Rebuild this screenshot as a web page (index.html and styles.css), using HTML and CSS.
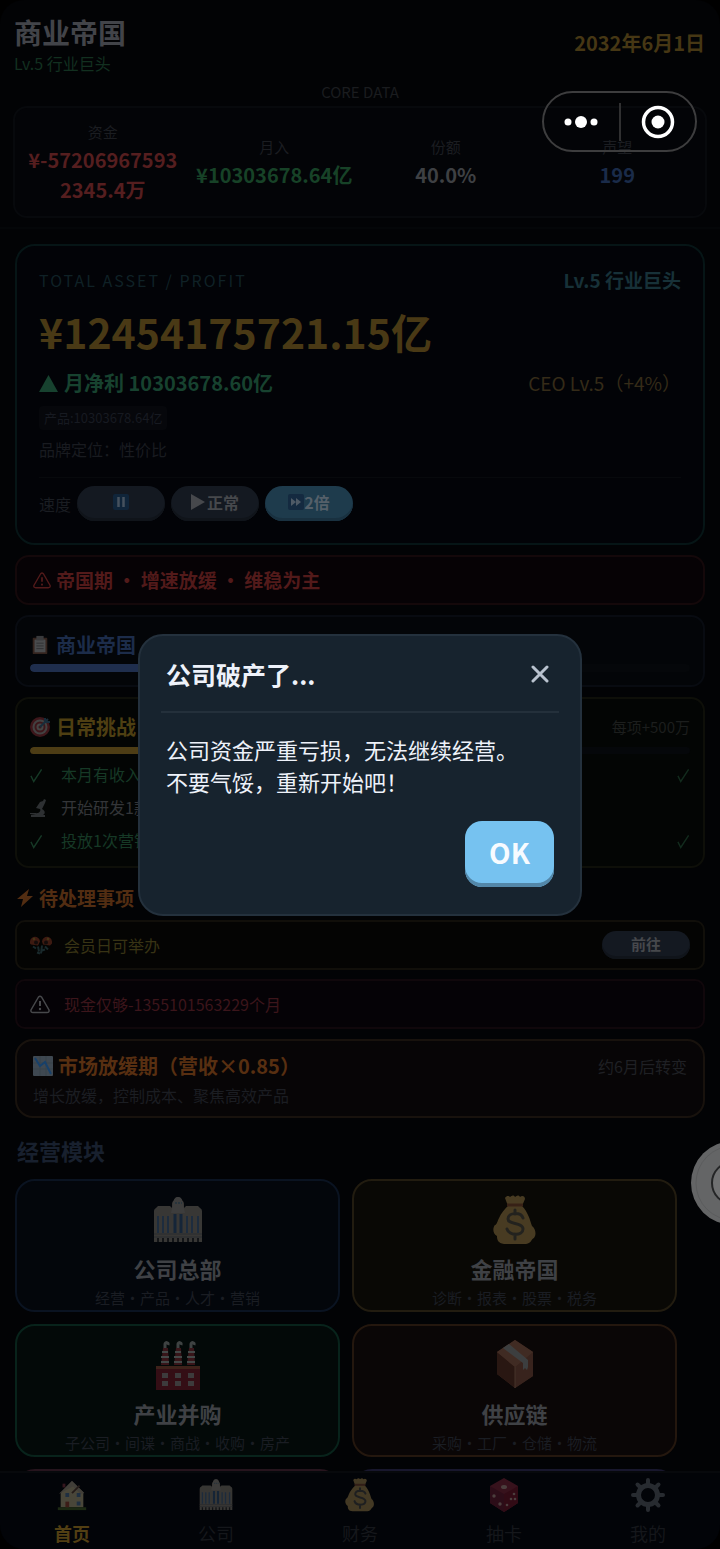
FILE: index.html
```html
<!DOCTYPE html>
<html lang="zh-CN">
<head>
<meta charset="utf-8">
<meta name="viewport" content="width=device-width, initial-scale=1">
<title>商业帝国</title>
<link rel="stylesheet" href="styles.css">
</head>
<body>
<svg class="defs" aria-hidden="true">
  <symbol id="i-tower" viewBox="0 0 50 46">
    <path d="M1 14q0-2 2-3l2-2h12l2 2V7q0-3 3-4 0-3 3-3t3 3q3 1 3 4v4l2-2h12l2 2q2 1 2 3v31H1z" fill="#a89f8f"/>
    <path d="M20 8q0-8 5-8t5 8l2 8H18z" fill="#b8b2a8"/>
    <path d="M22 6h7" stroke="#7b97a8" stroke-width="2" stroke-dasharray="2 1"/>
    <path d="M5 19v17M10 19v17M15 19v17M34 19v17M39 19v17M45 19v17" stroke="#557eaa" stroke-width="2"/>
    <path d="M22 17v19M28 17v19" stroke="#3d6797" stroke-width="3"/>
    <path d="M1 37h48M1 40h48" stroke="#777a7c" stroke-width="1"/>
    <path d="M5 41v4M10 41v4M15 41v4M20 41v4M25 41v4M30 41v4M35 41v4M40 41v4M45 41v4" stroke="#333" stroke-width="2"/>
  </symbol>
  <symbol id="i-bag" viewBox="0 0 44 50">
    <path d="M15 11L12 3c2-3 4-2 5-1 2-2 4-2 5 0 2-2 4-2 5 0 2-2 5-1 5 2l-3 7c6 6 8 14 10 20 3 2 5 8 2 12-3 1-2 5-8 6H11c-6-1-7-4-7-8-5-3-4-9-2-11 3 0 2-9 13-19z" fill="#cda85f"/>
    <path d="M14 10h16" stroke="#98583b" stroke-width="3"/>
    <path d="M30 23c-2-6-15-6-15 1 0 6 15 3 15 10 0 7-14 7-16 0M22 15v4M22 39v5" fill="none" stroke="#5b5a55" stroke-width="3" stroke-linecap="round"/>
  </symbol>
  <symbol id="i-factory" viewBox="0 0 46 50">
    <path d="M1 26h44v24H1z" fill="#9c1b31"/>
    <path d="M1 26h44v3H1z" fill="#ba5940"/>
    <path d="M8 8h5l1 17H6zM21 8h5l1 17h-8zM34 8h5l1 17h-8z" fill="#a9303e"/>
    <path d="M7 12h6M6 17h8M6 22h8M20 12h6M19 17h8M19 22h8M33 12h7M32 17h8M32 22h8" stroke="#ccc" stroke-width="2"/>
    <path d="M10 8V4c0-2 4-2 3 1M23 8V4c0-2 4-2 3 1M36 8V4c0-2 4-2 3 1" fill="none" stroke="#bbb" stroke-width="3"/>
    <path d="M7 33h6v5H7zm13 0h6v5h-6zm13 0h6v5h-6zM7 41h6v5H7zm13 0h6v5h-6zm13 0h6v5h-6z" fill="#b7a6ab"/>
  </symbol>
  <symbol id="i-box" viewBox="0 0 38 50">
    <path d="M19 0l18 12v24L19 48 1 34V12z" fill="#a7664d"/>
    <path d="M1 12l18 15v21L1 34z" fill="#6c3b2c"/>
    <path d="M19 27l18-15v24L19 48z" fill="#98624d"/>
    <path d="M19 0l18 12-18 15L1 12z" fill="#b37b62"/>
    <path d="M13 4L7 8l20 15v7l2-2 2 2 1-3v-7z" fill="#a7b5b8"/>
    <path d="M19 27v21" stroke="#c09075"/>
  </symbol>
  <symbol id="i-house" viewBox="-2 -2 34 36">
    <path d="M5 8V4h3v4" fill="#a23d4c"/>
    <path d="M3 14L15 2l12 11v16H3z" fill="#dfd0a2"/>
    <path d="M1 15L15 1l13 13-4 1-8-8z" fill="#c5b89e"/>
    <path d="M15 14l8-8" stroke="#6d4c3c" stroke-width="2"/>
    <path d="M8 14h4v4H8zm12 0h4v4h-4zm0 9h4v4h-4z" fill="#5c8bb8"/>
    <path d="M8 23h4v7H8z" fill="#b5523b"/><path d="M0 29h30v3H0z" fill="#55782d"/>
  </symbol>
  <symbol id="i-dice" viewBox="0 0 30 34">
    <path d="M15 0l14 8v17l-14 9L1 25V8z" fill="#a83048"/>
    <path d="M1 8l14 8v18L1 25z" fill="#85213a"/><path d="M15 16l14-8v17l-14 9z" fill="#941a33"/>
    <ellipse cx="15" cy="9" rx="3" ry="2" fill="#e6b8ae"/>
    <g fill="#e6b8ae"><circle cx="5" cy="18" r="1.700"/><circle cx="11" cy="26" r="1.700"/><circle cx="25" cy="16" r="1.300"/><circle cx="22" cy="21" r="1.300"/><circle cx="18" cy="27" r="1.300"/><circle cx="26" cy="21" r="1.300"/></g>
  </symbol>
  <symbol id="i-gear" viewBox="0 0 34 34">
    <circle cx="17" cy="17" r="9.500" fill="none" stroke="#777d84" stroke-width="5"/>
    <path d="M17 2v5M17 27v5M2 17h5M27 17h5M6.500 6.500l4 4M23.500 23.500l4 4M6.500 27.500l4-4M23.500 10.500l4-4" stroke="#777d84" stroke-width="4" stroke-linecap="round"/>
  </symbol>
  <symbol id="i-warn" viewBox="0 0 20 18">
    <path d="M8.500 1.500L1 14.500Q.5 17 3 17h14q2.500 0 2-2.500L11.500 1.500q-1.500-1.500-3 0z" fill="none" stroke="currentColor" stroke-width="1.500"/>
    <path d="M10 5.500v5" stroke="currentColor" stroke-width="2"/><circle cx="10" cy="13.500" r="1.200" fill="currentColor"/>
  </symbol>
  <symbol id="i-check" viewBox="0 0 14 16">
    <path d="M1 9l3 6L12.500 2" fill="none" stroke="currentColor" stroke-width="1.500"/>
  </symbol>
</svg>

<div class="app">
  <header class="top">
    <div class="brand-row">
      <div>
        <h1 class="brand">商业帝国</h1>
        <p class="rank">Lv.5 行业巨头</p>
      </div>
      <time class="date" datetime="2032-06-01">2032年6月1日</time>
    </div>
    <p class="core-title">CORE DATA</p>
    <dl class="stats">
      <div class="stat red"><dt>资金</dt><dd>¥-572069675932345.4万</dd></div>
      <div class="stat green"><dt>月入</dt><dd>¥10303678.64亿</dd></div>
      <div class="stat plain"><dt>份额</dt><dd>40.0%</dd></div>
      <div class="stat blue"><dt>声望</dt><dd>199</dd></div>
    </dl>
  </header>

  <main class="content">
    <section class="hero">
      <div class="split">
        <span class="hero-label">TOTAL ASSET / PROFIT</span>
        <strong class="hero-rank">Lv.5 行业巨头</strong>
      </div>
      <p class="asset">¥12454175721.15亿</p>
      <div class="split profit-row">
        <strong class="profit"><svg class="up" viewBox="0 0 19 17"><path d="M9.500 0L19 17H0z" fill="currentColor"/></svg>月净利 10303678.60亿</strong>
        <span class="ceo">CEO Lv.5（+4%）</span>
      </div>
      <span class="tag">产品:10303678.64亿</span>
      <p class="position">品牌定位：性价比</p>
      <div class="speed">
        <span class="speed-label">速度</span>
        <button class="pill" type="button" aria-label="暂停"><svg class="key" viewBox="0 0 16 16"><rect width="16" height="16" rx="2" fill="#10253a"/><path d="M5.500 3v10M10.500 3v10" stroke="#46515e" stroke-width="2.500"/></svg></button>
        <button class="pill" type="button"><svg class="play" viewBox="0 0 14 16"><path d="M0 0l14 8-14 8z" fill="currentColor"/></svg>正常</button>
        <button class="pill active" type="button"><svg class="key" viewBox="0 0 16 16"><rect width="16" height="16" rx="2" fill="#142a40"/><path d="M3 4l5 4-5 4zM8 4l5 4-5 4z" fill="#4e5a66"/></svg>2倍</button>
      </div>
    </section>

    <section class="notice"><svg class="ic-sm"><use href="#i-warn"/></svg>帝国期 · 增速放缓 · 维稳为主</section>

    <section class="card goal">
      <h2 class="card-title"><svg class="ic-md dim" viewBox="0 0 20 22"><rect x="2" y="3" width="16" height="18" rx="1" fill="#9b654d"/><path d="M4 5h12v14H4z" fill="#ddd"/><path d="M6 1h8v5H6z" fill="#aaa"/><path d="M6 9h8M6 12h8M6 15h8" stroke="#888"/></svg>商业帝国</h2>
      <div class="bar"><i class="fill"></i></div>
    </section>

    <section class="card daily">
      <div class="split">
        <h2 class="card-title"><svg class="ic-md dim" viewBox="0 0 20 20"><circle cx="10" cy="10" r="10" fill="#b63c4a"/><circle cx="10" cy="10" r="7.500" fill="#c8c4c5"/><circle cx="10" cy="10" r="5.500" fill="#b63c4a"/><circle cx="10" cy="10" r="3.500" fill="#ccc"/><circle cx="10" cy="10" r="1.500" fill="#b63c4a"/><path d="M10 10l8-8M15 5V1M15 5h5" stroke="#417fad" stroke-width="2"/></svg>日常挑战</h2>
        <span class="bonus">每项+500万</span>
      </div>
      <div class="bar"><i class="fill"></i></div>
      <ul class="tasks">
        <li class="done"><svg class="check"><use href="#i-check"/></svg><span>本月有收入</span><svg class="check end"><use href="#i-check"/></svg></li>
        <li><svg class="check scope" viewBox="0 0 18 18"><path d="M0 14h5c5 1 6-3 5-4L6 9l4-6 3-1 1-2 2 1-1 3-3 6c4 2 3 5 1 6h2v2H1v-2h5l-6-1z" fill="currentColor"/></svg><span>开始研发1款</span></li>
        <li class="done"><svg class="check"><use href="#i-check"/></svg><span>投放1次营销</span><svg class="check end"><use href="#i-check"/></svg></li>
      </ul>
    </section>

    <h2 class="todo-title"><svg class="bolt" viewBox="0 0 16 18"><path d="M12 0L0 10h6L4 18 16 7h-6z" fill="currentColor"/></svg>待处理事项</h2>
    <div class="todo gold">
      <svg class="todo-ic dim" viewBox="0 0 22 18"><path d="M0 7C-1-1 9-2 10 5L8 9 1 8zM12 5c1-7 11-6 10 2l-2 2-7-1z" fill="#b64a30"/><path d="M3 3l2-1M17 2l2 1" stroke="#d0a040" stroke-width="2"/><circle cx="6" cy="6" r="2" fill="#331d1d"/><circle cx="16" cy="6" r="2" fill="#331d1d"/><path d="M3 10l3 2M8 10l1 5M12 9l-1 8M15 10l3 3M7 16l3 1M12 14l3-1" stroke="#457780" stroke-width="2"/></svg>
      <span>会员日可举办</span><button class="pill go" type="button">前往</button>
    </div>
    <div class="todo danger">
      <svg class="todo-ic"><use href="#i-warn"/></svg><span>现金仅够-1355101563229个月</span>
    </div>

    <section class="card market">
      <div class="split">
        <h2 class="card-title"><svg class="ic-md" viewBox="0 0 20 20"><rect width="20" height="20" rx="1" fill="#3f4851"/><path d="M0 7h20M0 13h20M7 0v20M13 0v20" stroke="#38424b"/><path d="M2 2l5 8 5-4 6 12" fill="none" stroke="#17406a" stroke-width="2"/></svg>市场放缓期（营收×0.85）</h2>
        <span class="change">约6月后转变</span>
      </div>
      <p class="market-desc">增长放缓，控制成本、聚焦高效产品</p>
    </section>

    <h2 class="section-title">经营模块</h2>
    <div class="modules">
      <button class="module navy" type="button"><svg class="mod-ic dim"><use href="#i-tower"/></svg><strong>公司总部</strong><small>经营·产品·人才·营销</small></button>
      <button class="module amber" type="button"><svg class="mod-ic dim"><use href="#i-bag"/></svg><strong>金融帝国</strong><small>诊断·报表·股票·税务</small></button>
      <button class="module teal" type="button"><svg class="mod-ic dim"><use href="#i-factory"/></svg><strong>产业并购</strong><small>子公司·间谍·商战·收购·房产</small></button>
      <button class="module brown" type="button"><svg class="mod-ic dim"><use href="#i-box"/></svg><strong>供应链</strong><small>采购·工厂·仓储·物流</small></button>
      <div class="module rose"></div>
      <div class="module violet"></div>
    </div>
  </main>

  <nav class="tabs">
    <button class="tab on" type="button"><svg class="tab-ic dim"><use href="#i-house"/></svg>首页</button>
    <button class="tab" type="button"><svg class="tab-ic dim"><use href="#i-tower"/></svg>公司</button>
    <button class="tab" type="button"><svg class="tab-ic dim"><use href="#i-bag"/></svg>财务</button>
    <button class="tab" type="button"><svg class="tab-ic dim"><use href="#i-dice"/></svg>抽卡</button>
    <button class="tab" type="button"><svg class="tab-ic dim"><use href="#i-gear"/></svg>我的</button>
  </nav>
</div>

<div class="capsule">
  <button type="button" aria-label="更多"><svg width="34" height="14" viewBox="0 0 34 14" fill="#fff"><circle cx="4" cy="7" r="3.500"/><circle cx="17" cy="7" r="6"/><circle cx="30" cy="7" r="3.500"/></svg></button>
  <button type="button" aria-label="关闭小程序"><svg width="34" height="34" viewBox="0 0 34 34"><circle cx="17" cy="17" r="14.500" fill="none" stroke="#fff" stroke-width="3.500"/><circle cx="17" cy="17" r="6.500" fill="#fff"/></svg></button>
</div>

<button class="float-ball" type="button" aria-label="悬浮球"><svg viewBox="0 0 84 84"><circle cx="42" cy="42" r="42" fill="#646566"/><circle cx="42" cy="42" r="37" fill="none" stroke="#5b5c5d"/><circle cx="42" cy="42" r="21" fill="#707172" stroke="#242526" stroke-width="2"/></svg></button>

<div class="overlay">
  <div class="dialog" role="dialog" aria-modal="true" aria-labelledby="dlg-title">
    <div class="dialog-head">
      <h2 id="dlg-title">公司破产了...</h2>
      <button class="close" type="button" aria-label="关闭"><svg width="18" height="18" viewBox="0 0 18 18"><path d="M2 2l14 14M16 2L2 16" stroke="#b9c2cf" stroke-width="3" stroke-linecap="round"/></svg></button>
    </div>
    <p class="dialog-text">公司资金严重亏损，无法继续经营。<br>不要气馁，重新开始吧！</p>
    <div class="dialog-foot"><button class="ok" type="button">OK</button></div>
  </div>
</div>
</body>
</html>
```

FILE: styles.css
```css
* { box-sizing: border-box; }
body, h1, h2, p, dl, dd, ul { margin: 0; padding: 0; }
body {
  background: #000;
  color: #3c3e43;
  font-family: "Noto Sans CJK SC", "Noto Sans", sans-serif;
  font-size: 16px;
  line-height: 24px;
}
button { font: inherit; color: inherit; border: 0; background: none; padding: 0; }
svg { flex: none; }
.defs { position: absolute; width: 0; height: 0; }
.dim { opacity: .32; }

.app {
  height: 100vh;
  display: flex;
  flex-direction: column;
  overflow: hidden;
  background: #020305;
  border-radius: 24px;
}
.split { display: flex; justify-content: space-between; align-items: center; }

.top { padding: 12px 13px 9px; border-bottom: 2px solid #040608; }
.brand-row { display: flex; justify-content: space-between; align-items: center; padding: 0 2px 0 1px; }
.brand { font-size: 28px; line-height: 40px; font-weight: 700; color: #424449; }
.rank { line-height: 22px; color: #123020; }
.date { font-size: 20px; font-weight: 700; color: #463714; }
.core-title { padding-top: 4px; text-align: center; font-size: 15px; line-height: 28px; color: #1a1c1f; }
.stats {
  display: grid;
  grid-template-columns: repeat(4, 1fr);
  align-items: center;
  min-height: 112px;
  padding: 0 2px;
  border: 2px solid #07090c;
  border-radius: 14px;
  background: #030407;
}
.stat { text-align: center; padding: 0 6px; }
.stat dt { font-size: 15px; line-height: 26px; color: #1b1d21; }
.stat dd { font-size: 20px; line-height: 30px; font-weight: 700; word-break: break-all; }
.red dd { color: #551e1f; }
.green dd { color: #174227; }
.plain dd { color: #3e4043; }
.blue dd { color: #1a2b49; }

.content { flex: 1; min-height: 0; overflow: hidden; padding: 15px 15px 0; }
.hero {
  padding: 20px 22px 22px;
  border: 2px solid #061516;
  border-radius: 20px;
  background: #020307;
}
.hero-label { letter-spacing: 2px; color: #0f2126; line-height: 28px; }
.hero-rank { font-size: 19px; color: #173138; }
.asset { font-size: 41px; line-height: 60px; padding-top: 7px; font-weight: 700; color: #493915; }
.profit-row { padding: 7px 0 8px; line-height: 30px; }
.profit { font-size: 20px; color: #17422f; display: flex; align-items: center; gap: 6px; }
.up { width: 19px; height: 17px; }
.ceo { font-size: 19px; color: #352b18; }
.tag { display: block; width: fit-content; padding: 0 5px; border-radius: 4px; background: #06070b; color: #171a21; font-size: 13px; line-height: 24px; }
.position { color: #191b20; line-height: 38px; }
.speed { display: flex; align-items: center; gap: 6px; border-top: 1px solid #07090c; padding-top: 8px; margin-top: 9px; }
.speed-label { color: #1a1d22; }
.pill {
  display: flex;
  align-items: center;
  justify-content: center;
  width: 88px;
  height: 35px;
  padding-bottom: 3px;
  border-radius: 18px;
  background: #141921;
  box-shadow: inset 0 -3px #10141a;
  font-weight: 700;
  color: #46484c;
}
.pill.active { background: #1e3b4c; box-shadow: inset 0 -3px #193140; color: #55606a; }
.key { width: 16px; height: 16px; }
.play { width: 14px; height: 16px; margin-right: 2px; }

.notice, .card, .todo { border: 2px solid; border-radius: 14px; }
.notice {
  display: flex;
  align-items: center;
  gap: 5px;
  height: 50px;
  margin-top: 10px;
  padding: 0 16px;
  border-color: #14080a;
  background: #060205;
  font-size: 19px;
  font-weight: 700;
  color: #521a1a;
}
.ic-sm { width: 18px; height: 17px; }
.ic-md { width: 20px; height: 20px; }
.card { margin-top: 10px; padding: 12px 13px; }
.card-title { display: flex; align-items: center; gap: 6px; font-size: 20px; line-height: 32px; font-weight: 700; }
.bar { height: 8px; border-radius: 4px; background: #05070a; overflow: hidden; }
.fill { display: block; width: 62%; height: 8px; border-radius: 4px; }
.goal { height: 72px; border-color: #080b11; background: #030508; color: #1c2c4a; }
.goal .bar { margin-top: 3px; }
.goal .fill { background: #1f2e4d; }
.daily { height: 171px; border-color: #0e0f09; background: #030504; color: #4e3f12; }
.daily .bar { height: 7px; margin-top: 4px; }
.daily .fill { background: #4d3d15; }
.bonus { font-size: 15px; color: #1c1e1d; }
.tasks { list-style: none; padding-top: 4px; font-size: 16px; }
.tasks li { display: flex; align-items: center; line-height: 33px; color: #333538; }
.tasks .done { color: #163926; }
.check { width: 13px; height: 16px; margin-right: 18px; }
.check.scope { width: 18px; height: 18px; margin-right: 13px; color: #2d3032; }
.check.end { margin: 0 0 0 auto; color: #122b1d; }

.todo-title { display: flex; align-items: center; gap: 6px; padding-left: 2px; margin-top: 14px; font-size: 19px; line-height: 32px; color: #522d12; }
.bolt { width: 16px; height: 18px; }
.todo { display: flex; align-items: center; gap: 12px; height: 50px; padding: 0 13px; border-radius: 10px; }
.todo.gold { margin-top: 6px; border-color: #110f0a; background: #040403; color: #383314; }
.todo.danger { margin-top: 9px; border-color: #10070b; background: #050206; color: #3c151b; }
.todo-ic { width: 22px; height: 19px; }
.danger .todo-ic { width: 20px; height: 19px; margin-right: 2px; color: #47484b; }
.pill.go { height: 28px; margin-left: auto; font-size: 15px; line-height: 24px; }
.market { margin-top: 10px; height: 79px; padding: 9px 16px; border-radius: 18px; border-color: #18120d; background: #070506; color: #582f11; }
.market .ic-md { margin-right: -1px; }
.change { color: #1f2024; }
.market-desc { line-height: 26px; color: #1b1d22; }

.section-title { padding: 15px 2px 12px; font-size: 22px; line-height: 34px; color: #18202e; }
.modules { display: grid; grid-template-columns: 1fr 1fr; gap: 12px; margin-right: 28px; }
.module {
  display: flex;
  flex-direction: column;
  align-items: center;
  height: 133px;
  padding: 14px 4px 0;
  border: 2px solid;
  border-radius: 20px;
  white-space: nowrap;
}
.mod-ic { width: 50px; height: 50px; }
.module strong { font-size: 22px; line-height: 32px; padding-top: 7px; color: #3f4145; }
.module small { font-size: 15px; line-height: 28px; color: #1a1d23; }
.navy { border-color: #0a1321; background: #03060b; }
.amber { border-color: #221c10; background: #090805; }
.teal { border-color: #08231b; background: #030908; }
.brown { border-color: #24170e; background: #0a0606; }
.rose { border-color: #26141d; }
.violet { border-color: #18172d; }

.tabs { display: grid; grid-template-columns: repeat(5, 1fr); height: 78px; border-top: 2px solid #07090c; background: #020408; }
.tab { display: flex; flex-direction: column; align-items: center; gap: 7px; padding-top: 5px; font-size: 18px; line-height: 28px; color: #15171b; }
.tab.on { color: #523f13; font-weight: 700; }
.tab-ic { width: 34px; height: 34px; }

.capsule {
  position: fixed;
  top: 91px;
  right: 23px;
  z-index: 3;
  display: flex;
  align-items: center;
  width: 155px;
  height: 61px;
  border: 2px solid #3d3d3e;
  border-radius: 31px;
}
.capsule button { flex: 1; height: 38px; display: flex; align-items: center; justify-content: center; }
.capsule button + button { border-left: 2px solid #303031; }
.float-ball { position: fixed; top: 1141px; right: -55px; z-index: 1; width: 84px; height: 84px; }

.overlay { position: fixed; inset: 0; z-index: 2; display: flex; align-items: center; justify-content: center; padding: 24px; }
.dialog {
  width: 100%;
  max-width: 444px;
  padding: 12px 21px 27px;
  border: 2px solid #24313d;
  border-radius: 25px;
  background: #17232e;
  color: #eef2fa;
}
.dialog-head { display: flex; align-items: center; justify-content: space-between; padding: 5px 10px 16px 5px; border-bottom: 2px solid #24303b; }
.dialog-head h2 { font-size: 25px; line-height: 42px; }
.close { display: flex; }
.dialog-text { padding: 20px 5px 24px; font-size: 22px; line-height: 32px; }
.dialog-foot { display: flex; justify-content: flex-end; padding-right: 5px; }
.ok { width: 89px; height: 66px; padding-bottom: 4px; border-radius: 17px; background: #76c2f0; box-shadow: inset 0 -4px #5387a9; font-size: 28px; font-weight: 700; color: #f7fbff; }
```
